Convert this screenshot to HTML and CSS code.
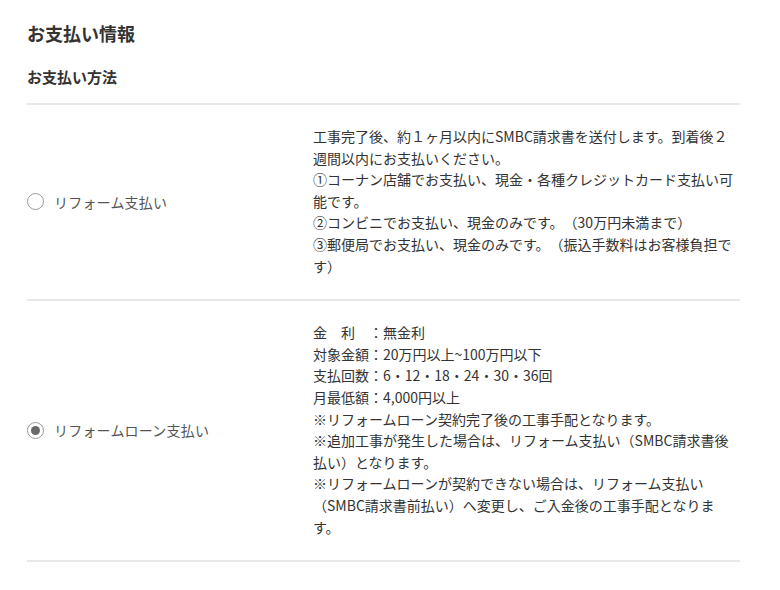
FILE: index.html
```html
<!DOCTYPE html>
<html lang="ja">
	<head>
		<meta charset="utf-8">
		<meta name="viewport" content="width=device-width">
		<title>お支払い情報</title>
		<link rel="stylesheet" href="styles.css">
	</head>

	<body>
		<section class="payment">
			<h2 class="payment-title">お支払い情報</h2>
			<h3 class="payment-subtitle">お支払い方法</h3>

			<ul class="methods">
				<li class="method">
					<label class="method-label">
						<input type="radio" name="method" value="reform">
						<span>リフォーム支払い</span>
					</label>
					<div class="method-text">
						<p>工事完了後、約１ヶ月以内にSMBC請求書を送付します。到着後２週間以内にお支払いください。</p>
						<p>①コーナン店舗でお支払い、現金・各種クレジットカード支払い可能です。</p>
						<p>②コンビニでお支払い、現金のみです。（30万円未満まで）</p>
						<p>③郵便局でお支払い、現金のみです。（振込手数料はお客様負担です）</p>
					</div>
				</li>
				<li class="method">
					<label class="method-label">
						<input type="radio" name="method" value="loan" checked>
						<span>リフォームローン支払い</span>
					</label>
					<div class="method-text">
						<p>金　利　：無金利</p>
						<p>対象金額：20万円以上~100万円以下</p>
						<p>支払回数：6・12・18・24・30・36回</p>
						<p>月最低額：4,000円以上</p>
						<p>※リフォームローン契約完了後の工事手配となります。</p>
						<p>※追加工事が発生した場合は、リフォーム支払い（SMBC請求書後払い）となります。</p>
						<p>※リフォームローンが契約できない場合は、リフォーム支払い（SMBC請求書前払い）へ変更し、ご入金後の工事手配となります。</p>
					</div>
				</li>
			</ul>
		</section>
	</body>

</html>
```

FILE: styles.css
```css
body {
	margin: 0;
	background: #fff;
	color: #333;
	font-family: "Noto Sans CJK JP", "Noto Sans", sans-serif;
	text-spacing-trim: space-all;
}
.payment {
	width: 713px;
	padding: 20px 0 0 27px;
}
.payment-title {
	margin: 0 0 20px;
	font-size: 18px;
	line-height: 26px;
	font-weight: bold;
}
.payment-subtitle {
	margin: 0;
	padding-bottom: 15px;
	font-size: 15px;
	line-height: 22px;
	font-weight: bold;
	border-bottom: 2px solid #e8e8e8;
}
.methods {
	list-style: none;
	margin: 0;
	padding: 0;
}
.method {
	display: grid;
	grid-template-columns: 286px 1fr;
	align-items: center;
	padding: 21px 0 22px;
	border-bottom: 2px solid #e8e8e8;
}
.method-label {
	display: flex;
	align-items: center;
	gap: 10px;
	font-size: 14px;
	letter-spacing: 0.2px;
	color: #555;
}
.method-label input {
	appearance: none;
	box-sizing: border-box;
	margin: 0;
	width: 17px;
	height: 17px;
	border: 1.5px solid #999;
	border-radius: 50%;
	display: grid;
	place-items: center;
}
.method-label input:checked::after {
	content: "";
	width: 9px;
	height: 9px;
	border-radius: 50%;
	background: #6a6a6a;
}
.method-text {
	font-size: 14px;
	line-height: 21.6px;
	color: #333;
	line-break: strict;
}
.method-text p {
	margin: 0;
}
```
